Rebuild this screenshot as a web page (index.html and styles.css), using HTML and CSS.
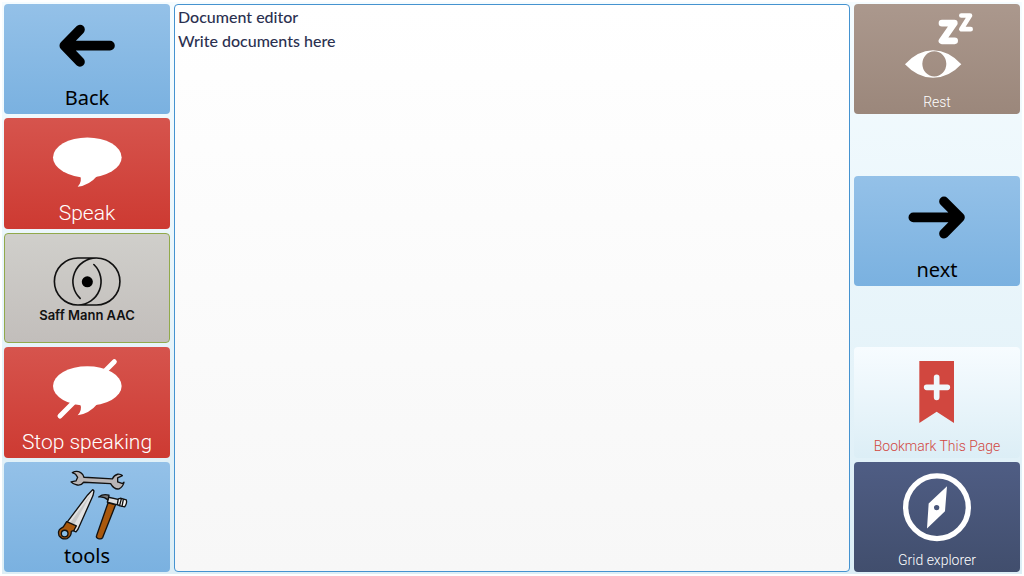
FILE: index.html
```html
<!DOCTYPE html>
<html lang="en">
<head>
<meta charset="utf-8">
<meta name="viewport" content="width=device-width, initial-scale=1">
<title>Document editor</title>
<link rel="stylesheet" href="styles.css">
</head>
<body>
<main class="board">
  <nav class="column" aria-label="Speech and tools">
    <button class="tile blue" type="button">
      <svg class="icon" viewBox="0 0 166 80" aria-hidden="true"><g transform="translate(-4 -4) scale(.3333)" fill="none" stroke="#000" stroke-width="29" stroke-linecap="round" stroke-linejoin="round"><path d="M330 136.500H200M240 88L193 136.500L240 185"/><path d="M222 125L200 136L222 148Z" stroke-width="8" fill="#000"/></g></svg>
      <span class="label">Back</span>
    </button>
    <button class="tile red" type="button">
      <svg class="icon" viewBox="0 0 166 80" aria-hidden="true"><g transform="translate(-4 -2.400) scale(.3333)" fill="#fff"><ellipse cx="262" cy="125" rx="103" ry="60"/><path d="M240 178Q248 198 233 213Q268 209 292 180Z"/></g></svg>
      <span class="label light">Speak</span>
    </button>
    <button class="tile gray" type="button">
      <svg class="icon" viewBox="0 0 166 74" aria-hidden="true"><g transform="translate(-4 -2.800) scale(.3333)" fill="none" stroke="#111" stroke-width="5" stroke-linecap="round"><path d="M290 82H233A72 72 0 0 0 233 226H290A72 72 0 0 0 290 82A72 72 0 0 0 240 206M282 102A72 72 0 0 1 233 226"/><circle cx="262" cy="155" r="17" fill="#000" stroke="none"/></g></svg>
      <span class="label logo">Saff Mann AAC</span>
    </button>
    <button class="tile red" type="button">
      <svg class="icon" viewBox="0 0 166 80" aria-hidden="true"><g transform="translate(-4 -3.200) scale(.3333)" fill="#fff"><path d="M343 53L180 216" stroke="#fff" stroke-width="15" stroke-linecap="round"/><ellipse cx="262" cy="126" rx="103" ry="59"/><path d="M240 178Q248 198 233 214Q268 209 292 180Z"/></g></svg>
      <span class="label light">Stop speaking</span>
    </button>
    <button class="tile blue" type="button">
      <svg class="icon" viewBox="0 0 166 80" aria-hidden="true"><g transform="translate(46 2.400) scale(.3333)" stroke="#111" stroke-width="4" stroke-linejoin="round" stroke-linecap="round">
        <path fill="#b9b5b6" d="M67 24Q80 17 92 24Q100 29 102 38L187 43Q192 32 203 29Q212 28 217 33L203 40L203 52L218 57L222 53Q220 66 207 73Q192 75 182 57L101 53Q92 65 78 60Q68 58 63 52L78 49L83 38L77 29Z"/>
        <path fill="#e2e2e2" d="M128 75L132 79L129 93L84 194L78 202L71 199L74 188L52 172L113 91Z"/>
        <path fill="#c8c8c8" stroke="none" d="M126 84L70 184L60 175Z"/>
        <path fill="#a9580d" d="M50 171L79 184L72 197L64 200Q64 216 51 222Q36 226 27 213Q22 200 32 192L40 187Z"/>
        <circle cx="44" cy="207" r="10" fill="#8bbfe8"/>
        <path fill="#a9580d" d="M174 115L197 120L158 219Q154 225 145 222Q137 219 140 213Z"/>
        <path fill="#dedede" d="M176 98L207 105L203 121L172 113Z"/>
        <path fill="#777" d="M146 97Q160 87 177 92L174 106Q162 95 146 97Z"/>
        <path fill="#f5f5f5" d="M205 103L211 101L229 106Q232 115 224 127L207 123L202 119Z"/>
        <path fill="none" d="M214 103L209 122M220 105L216 125"/>
      </g></svg>
      <span class="label">tools</span>
    </button>
  </nav>

  <textarea class="editor" aria-label="Document" spellcheck="false">Document editor
Write documents here</textarea>

  <nav class="column" aria-label="Navigation">
    <button class="tile brown" type="button">
      <svg class="icon" viewBox="0 0 166 86" aria-hidden="true"><g transform="translate(-10 -4) scale(.3333)" fill="none" stroke="#fff" stroke-linecap="round" stroke-linejoin="round"><path d="M294 69H331L294 122H332" stroke-width="20"/><path d="M352 46H378L352 87H380" stroke-width="14"/><path d="M183 192Q220 151 267 150Q315 151 352 192Q315 232 267 233Q220 232 183 192ZM307 191A36 38 0 1 0 235 191A36 38 0 1 0 307 191Z" fill="#fff" fill-rule="evenodd" stroke="none"/></g></svg>
      <span class="label small">Rest</span>
    </button>
    <button class="tile blue" type="button">
      <svg class="icon" viewBox="0 0 166 80" aria-hidden="true"><g transform="translate(-10 -5.800) scale(.3333)" fill="none" stroke="#000" stroke-width="29" stroke-linecap="round" stroke-linejoin="round"><path d="M208 141H340M300 93L348 141L300 190"/><path d="M318 130L340 141L318 152Z" stroke-width="8" fill="#000"/></g></svg>
      <span class="label">next</span>
    </button>
    <div class="pair">
      <button class="tile pale" type="button">
        <svg class="icon" viewBox="0 0 166 86" aria-hidden="true"><g transform="translate(-10 -3.200) scale(.3333)"><path d="M226 51H330V237L278 203L226 237Z" fill="#d1473f"/><path d="M248 130H310M278 100V160" stroke="#f0f8fc" stroke-width="17" stroke-linecap="round"/></g></svg>
        <span class="label small">Bookmark This Page</span>
      </button>
      <button class="tile navy" type="button">
        <svg class="icon" viewBox="0 0 166 86" aria-hidden="true"><g transform="translate(-10 -3.600) scale(.3333)"><circle cx="279" cy="146" r="94" fill="none" stroke="#fff" stroke-width="16"/><path d="M309 83L303 158L249 210L254 135ZM286 147A8 8 0 1 0 270 147A8 8 0 1 0 286 147Z" fill="#fff" fill-rule="evenodd"/></g></svg>
        <span class="label small">Grid explorer</span>
      </button>
    </div>
  </nav>
</main>
</body>
</html>
```
FILE: styles.css
```css
* {
  box-sizing: border-box;
}

body {
  margin: 0;
  background: #fff;
}

.board {
  display: grid;
  grid-template-columns: minmax(0, 166fr) minmax(0, 676fr) minmax(0, 166fr);
  gap: 4px;
  height: 100vh;
  padding: 2px;
  border: 2px solid #fff;
  background: linear-gradient(#f5fcff, #dceef6);
}

.column {
  display: flex;
  flex-direction: column;
  justify-content: space-between;
  min-height: 0;
}

.tile {
  display: flex;
  flex-direction: column;
  width: 100%;
  height: calc((100% - 16px) / 5);
  padding: 0;
  border: 0;
  border-radius: 4px;
  color: #000;
  cursor: pointer;
}

.pair {
  display: grid;
  grid-template-rows: 1fr 1fr;
  gap: 4px;
  height: calc((100% - 16px) / 5 * 2 + 4px);
}

.pair .tile {
  height: 100%;
}

.icon {
  flex: 1;
  width: 100%;
  min-height: 0;
}

.label {
  width: 100%;
  height: 30px;
  font: 20px/28px "Noto Sans", sans-serif;
  text-align: center;
}

.light {
  font: 300 21px/28px Roboto, sans-serif;
}

.small {
  height: 24px;
  font: 300 14px/24px Roboto, sans-serif;
}

.logo {
  height: 36px;
  color: #111;
  font: 600 13px/18px Inter, sans-serif;
}

.blue {
  background: linear-gradient(#94c1e8, #7ab1e0);
}

.red {
  background: linear-gradient(#d6544d, #cd3a32);
  color: #fff;
}

.gray {
  border: 1px solid #91a94b;
  background: linear-gradient(#d0cfcb, #c2bebb);
}

.brown {
  background: linear-gradient(#ab988d, #9b877b);
  color: #fff;
}

.pale {
  background: linear-gradient(#f7fcff, #dceef6);
  color: #d1473f;
}

.navy {
  background: linear-gradient(#4f5d84, #414e6d);
  color: #fff;
}

.editor {
  width: 100%;
  height: 100%;
  padding: 0 3px;
  border: 1px solid #4593d0;
  border-radius: 4px;
  outline: 0;
  background: linear-gradient(#fff, #f7f7f7);
  color: #2b3050;
  font: 500 16px/24px Lato, sans-serif;
  resize: none;
}
```
